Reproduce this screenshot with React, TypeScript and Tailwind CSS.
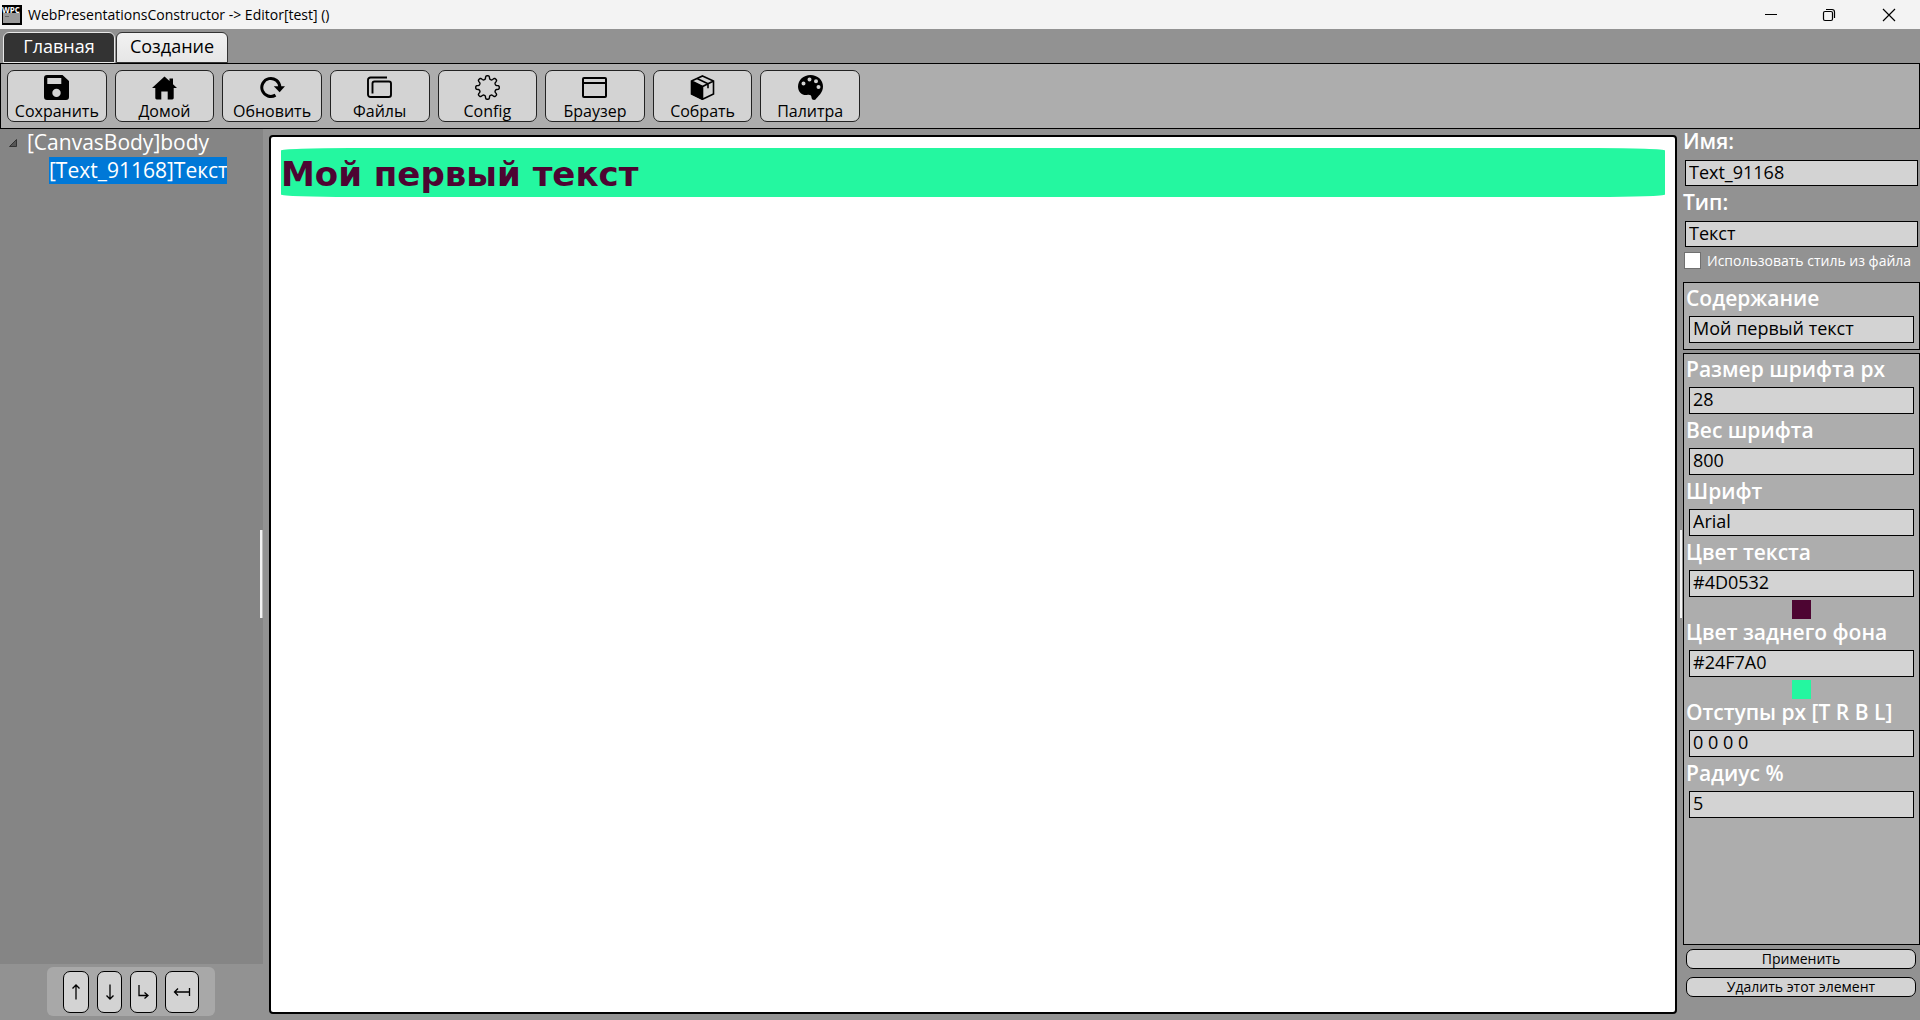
import type { ReactNode } from "react";

function Svg({ children }: { children: ReactNode }) {
  return (
    <svg viewBox="0 0 25 25" className="size-[25px] shrink-0" aria-hidden="true">
      {children}
    </svg>
  );
}

// Outline of an eight-toothed gear with rounded teeth.
const gear =
  Array.from({ length: 144 }, (_, i) => {
    const a = (i / 144) * Math.PI * 2;
    const r = 10.1 + 1.7 * Math.tanh(2.2 * Math.cos(8 * a));
    return `${i ? "L" : "M"}${(12.5 + r * Math.sin(a)).toFixed(2)} ${(12.5 - r * Math.cos(a)).toFixed(2)}`;
  }).join("") + "Z";

const icons: Record<string, ReactNode> = {
  save: (
    <Svg>
      <path fillRule="evenodd" d="M3 0h15.500L25 6v16a3 3 0 0 1-3 3H3a3 3 0 0 1-3-3V3a3 3 0 0 1 3-3ZM3.300 3v6h14V3ZM12.500 13.700a4.200 4.200 0 1 0 0 8.400a4.200 4.200 0 1 0 0-8.400Z" />
    </Svg>
  ),
  home: (
    <Svg>
      <path d="M12.500 1.500l5 4.600V3.500h3.500v5.700l4 3.800h-3.300v10a1.400 1.400 0 0 1-1.400 1.400h-4.600v-8h-6.400v8H4.700a1.400 1.400 0 0 1-1.400-1.400V13H0Z" />
    </Svg>
  ),
  refresh: (
    <Svg>
      <path d="M15.500 20.100A9 9 0 1 1 19.800 12" fill="none" stroke="black" strokeWidth="3" />
      <path d="M13.800 11.300H25l-5.400 6Z" />
    </Svg>
  ),
  files: (
    <Svg>
      <g fill="none" stroke="black" strokeWidth="1.900">
        <path d="M20 2.500H3.500A2.500 2.500 0 0 0 1 5V19.500a2.500 2.500 0 0 0 2.500 2.500H21.700a2.300 2.300 0 0 0 2.300-2.300V8.500A2 2 0 0 0 22 6.500H7.500a2 2 0 0 0-2 2V18.500" />
      </g>
    </Svg>
  ),
  config: (
    <Svg>
      <path fill="none" stroke="black" strokeWidth="1.400" strokeLinejoin="round" d={gear} />
    </Svg>
  ),
  browser: (
    <Svg>
      <rect x="1" y="3" width="23" height="19" rx="1" fill="none" stroke="black" strokeWidth="2" />
      <path d="M1 8h23" stroke="black" strokeWidth="2" />
    </Svg>
  ),
  box: (
    <Svg>
      <path d="M1 6l11.500 5v14L1 19Z" />
      <path d="M12.500 1L23.500 6v13L12.500 24.300L1.500 19V6ZM1.500 6l11 5.500L23.500 6M12.500 11.500v13M7 3.500l11 5.300v4.500" fill="none" stroke="black" strokeWidth="1.600" />
    </Svg>
  ),
  palette: (
    <Svg>
      <path fillRule="evenodd" d="M12.500 0C19.500 0 25 5 25 11.500C25 18 20 21 17.500 24.500C16.500 25.500 13.500 25 13.500 22.500C13.500 20 11.500 19.500 9 20C4 20.500 0 17 0 11.500C0 5 5.500 0 12.500 0ZM5.500 6.500a2 2 0 1 0 0 4a2 2 0 1 0 0-4ZM11.500 2.500a2 2 0 1 0 0 4a2 2 0 1 0 0-4ZM18 4.300a2 2 0 1 0 0 4a2 2 0 1 0 0-4ZM20.500 10a2 2 0 1 0 0 4a2 2 0 1 0 0-4Z" />
    </Svg>
  ),
};

const tools = [
  ["save", "Сохранить"],
  ["home", "Домой"],
  ["refresh", "Обновить"],
  ["files", "Файлы"],
  ["config", "Config"],
  ["browser", "Браузер"],
  ["box", "Собрать"],
  ["palette", "Палитра"],
];

function Field({ id, label, value, swatch }: { id: string; label: string; value: string; swatch?: string }) {
  return (
    <div className="flex flex-col px-[5px] pb-px">
      <label htmlFor={id} className="-ml-[3px] h-[33px] whitespace-nowrap text-[21px] leading-[30px] font-semibold text-white">
        {label}
      </label>
      <input id={id} defaultValue={value} className="h-[27px] w-full border border-black bg-[#d3d3d3] px-[3px] pb-1 text-lg" />
      {swatch && <div className={"mx-auto mt-[3px] -mb-[3px] size-[19px] " + swatch} />}
    </div>
  );
}

function TopField({ id, label, value }: { id: string; label: string; value: string }) {
  return (
    <div className="flex flex-col pr-0.5 pl-0.5">
      <label htmlFor={id} className="-ml-0.5 h-[35px] text-[21px] leading-[33px] font-semibold text-white">
        {label}
      </label>
      <input id={id} defaultValue={value} className="h-[26px] w-full border border-black bg-[#d3d3d3] px-[3px] pb-[3px] text-lg" />
    </div>
  );
}

const key = "flex h-[42px] items-center justify-center rounded-[7px] border border-black bg-[#d3d3d3]";

function Key({ label, width, d }: { label: string; width: string; d: string }) {
  return (
    <button type="button" aria-label={label} className={key + " " + width}>
      <svg viewBox="0 0 18 18" className="size-[18px]" fill="none" stroke="black" strokeWidth="1.300" aria-hidden="true">
        <path d={d} />
      </svg>
    </button>
  );
}

export default function App() {
  return (
    <div className="flex h-screen flex-col overflow-hidden bg-[#929292] font-['Open_Sans','Noto_Sans',sans-serif] text-black">
      <header className="flex h-[29px] shrink-0 items-center bg-[#f3f3f3] pl-0.5">
        <svg viewBox="0 0 20 20" className="size-5" aria-hidden="true">
          <rect width="20" height="20" fill="black" />
          <rect x="1" y="8" width="17" height="10" fill="#999" />
          <path d="M3 11.500h4" stroke="#666" />
          <text x="0" y="8" fontSize="8" fontWeight="700" fill="white">WPC</text>
        </svg>
        <h1 className="ml-1.5 text-sm">WebPresentationsConstructor -&gt; Editor[test] ()</h1>
        <div className="ml-auto flex h-full">
          <button type="button" aria-label="Свернуть" className="flex w-[58px] items-center justify-center">
            <svg viewBox="0 0 14 14" className="size-3.5" stroke="black"><path d="M1 6.500h12" /></svg>
          </button>
          <button type="button" aria-label="Восстановить" className="flex w-[58px] items-center justify-center">
            <svg viewBox="0 0 14 14" className="size-3.5" fill="none" stroke="black" strokeWidth="1.200">
              <rect x="1.500" y="3.500" width="9" height="9" rx="1.500" />
              <path d="M4 1.500h6a2.500 2.500 0 0 1 2.500 2.500v6" />
            </svg>
          </button>
          <button type="button" aria-label="Закрыть" className="flex w-[62px] items-center justify-center">
            <svg viewBox="0 0 14 14" className="size-3.5" stroke="black" strokeWidth="1.200"><path d="M1 1l12 12M13 1L1 13" /></svg>
          </button>
        </div>
      </header>

      <nav className="flex h-[34px] shrink-0 items-end gap-px pl-[3px] text-lg leading-[26px]">
        <button type="button" className="h-[31px] w-28 rounded-t-md border border-[#e8e8e8] bg-[#333] pb-1.5 text-white">Главная</button>
        <button type="button" className="h-[31px] w-28 rounded-t-md border border-[#333] bg-linear-to-b from-[#f2f2f2] to-[#e6e6e6] pb-1.5">Создание</button>
      </nav>

      <div className="flex h-[66px] shrink-0 items-center border border-black bg-[#adadad] pl-1.5">
        <div className="flex w-[853px] gap-2">
          {tools.map(([icon, label]) => (
            <button key={icon} type="button" className="flex h-[52px] min-w-0 flex-1 flex-col items-center rounded-[7px] border border-[#222] bg-[#d3d3d3] pt-1">
              {icons[icon]}
              <span className="text-base leading-[22px]">{label}</span>
            </button>
          ))}
        </div>
      </div>

      <div className="flex min-h-0 flex-1">
        <aside className="relative flex w-[263px] shrink-0 flex-col">
          <div className="flex-1 bg-[#858585] text-[21px] text-white">
            <div className="flex h-[28px] items-center gap-2.5 pl-[9px]">
              <svg viewBox="0 0 8 8" className="size-2" aria-hidden="true"><path d="M7.500.500v7H.500Z" fill="#555" stroke="#333" /></svg>
              <span className="whitespace-nowrap">[CanvasBody]body</span>
            </div>
            <div className="ml-[49px] flex h-[27px] w-[178px] items-center overflow-hidden bg-[#0078d7] whitespace-nowrap">[Text_91168]Текст</div>
          </div>
          <div className="flex h-[56px] items-start pt-[3px] pl-[47px]">
            <div className="flex h-[49px] w-[168px] items-center gap-2 rounded-md bg-[#a8a8a8] pl-4">
              <Key label="Вверх" width="w-[26px]" d="M9 16.500V2M5.500 5.500L9 2l3.500 3.500" />
              <Key label="Вниз" width="w-[25px]" d="M9 1.500V16M5.500 12.500L9 16l3.500-3.500" />
              <Key label="Внутрь" width="w-[27px]" d="M4 2v10.500h8.500M9.500 9.500l3.500 3l-3.500 3" />
              <Key label="Наружу" width="w-[34px]" d="M1.500 9H16.500V5v8M5 5.500L1.500 9L5 12.500" />
            </div>
          </div>
          <div className="absolute top-[401px] right-0 h-[88px] w-[3px] border-r border-[#bbb] bg-[#f4f4f4]" />
        </aside>

        <main className="mt-1.5 mr-1.5 mb-1.5 ml-1.5 min-w-0 flex-1 rounded border-2 border-black bg-white px-2.5 pt-[11px]">
          <div className="rounded-[5%] bg-[#24f7a0] pt-[3px] font-['DejaVu_Sans'] text-[34px] leading-[46px] font-black text-[#4d0532]">Мой первый текст</div>
        </main>

        <aside className="relative flex w-[237px] shrink-0 flex-col">
          <div className="absolute top-[401px] -left-[3px] h-[88px] w-0.5 bg-[#f4f4f4]" />
          <div className="-mt-1 flex flex-col">
            <TopField id="name" label="Имя:" value="Text_91168" />
            <TopField id="type" label="Тип:" value="Текст" />
          </div>
          <label className="mt-[5px] ml-px flex h-[17px] items-center gap-1.5 text-sm whitespace-nowrap text-white">
            <input type="checkbox" className="size-[17px] shrink-0 appearance-none border border-[#707070] bg-white" />
            Использовать стиль из файла
          </label>
          <section className="mt-[13px] h-[68px] shrink-0 border border-black bg-[#adadad]">
            <Field id="content" label="Содержание" value="Мой первый текст" />
          </section>
          <section className="mt-[3px] min-h-0 flex-1 border border-black bg-[#adadad]">
            <Field id="size" label="Размер шрифта px" value="28" />
            <Field id="weight" label="Вес шрифта" value="800" />
            <Field id="font" label="Шрифт" value="Arial" />
            <Field id="color" label="Цвет текста" value="#4D0532" swatch="bg-[#4d0532]" />
            <Field id="background" label="Цвет заднего фона" value="#24F7A0" swatch="bg-[#24f7a0]" />
            <Field id="margin" label="Отступы px [T R B L]" value="0 0 0 0" />
            <Field id="radius" label="Радиус %" value="5" />
          </section>
          <div className="flex flex-col gap-2 pt-1 pr-1 pb-[23px] pl-[3px] text-sm leading-[18px]">
            <button type="button" className="h-5 rounded-[7px] border border-black bg-[#d3d3d3]">Применить</button>
            <button type="button" className="h-5 rounded-[7px] border border-black bg-[#d3d3d3]">Удалить этот элемент</button>
          </div>
        </aside>
      </div>
    </div>
  );
}
